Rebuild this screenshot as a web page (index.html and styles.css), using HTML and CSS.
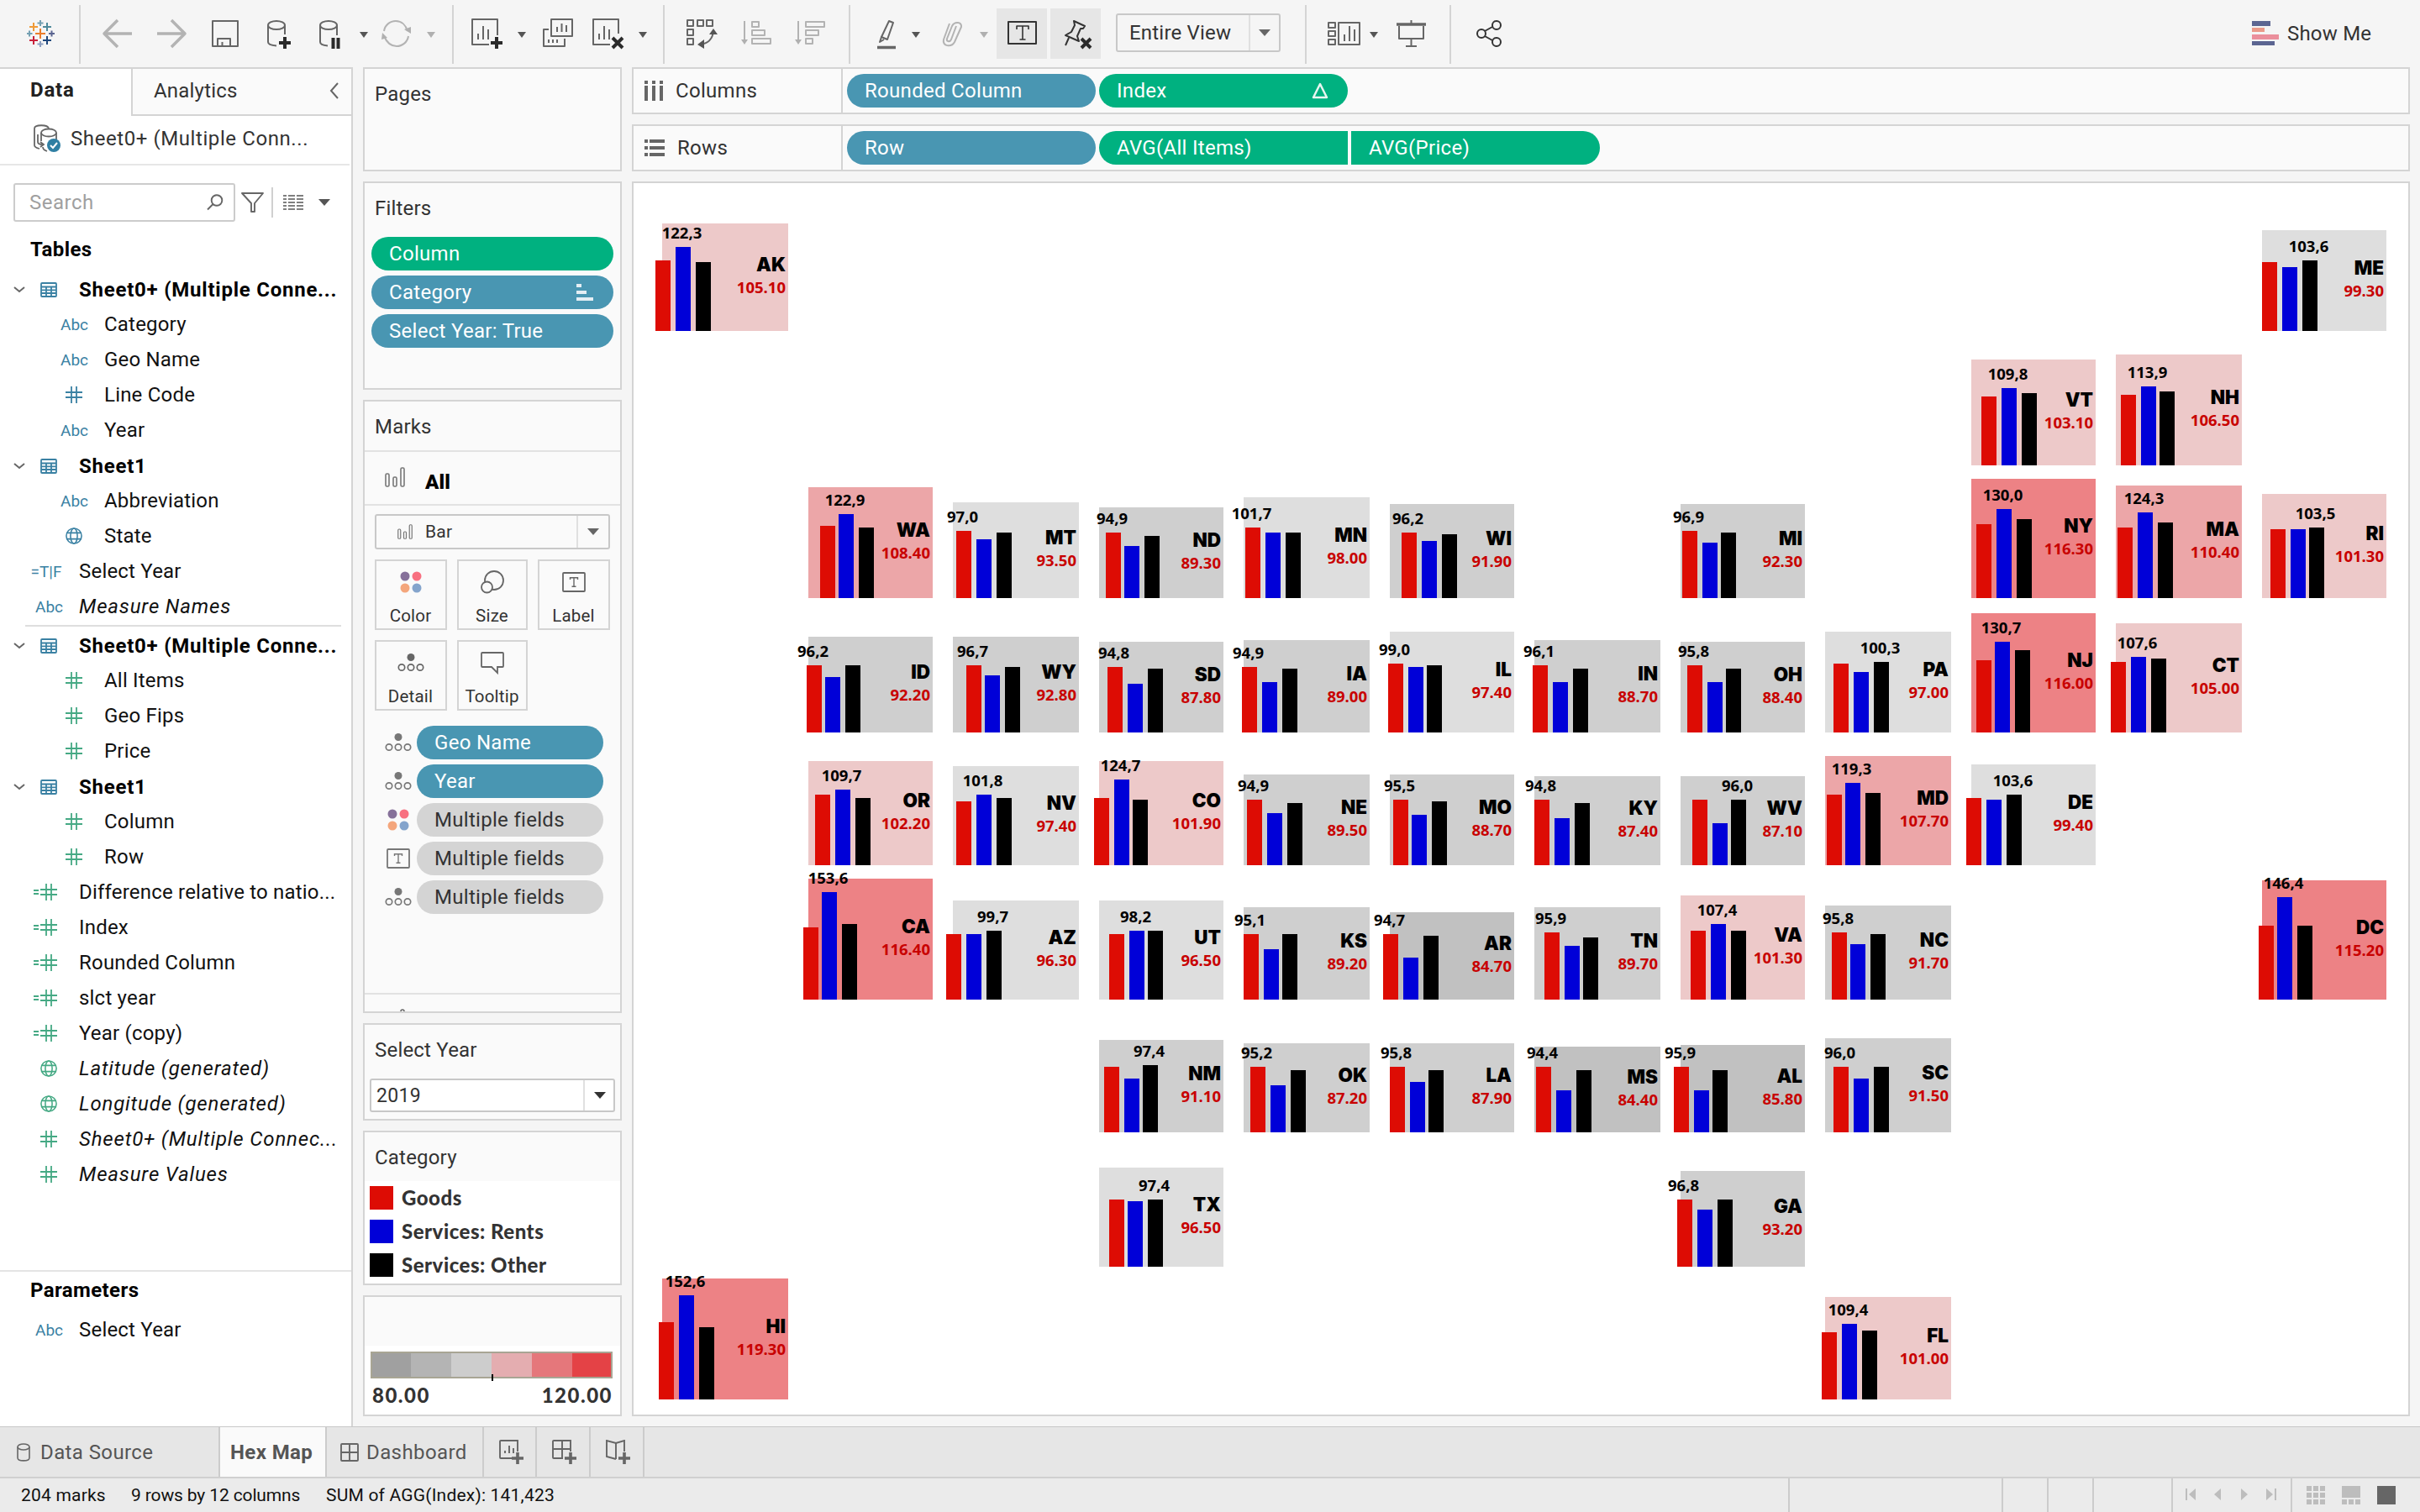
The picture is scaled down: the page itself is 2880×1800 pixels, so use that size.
FILE: index.html
```html
<!DOCTYPE html>
<html lang="en">
<head>
<meta charset="utf-8">
<title>Hex Map</title>
<link rel="stylesheet" href="styles.css">
</head>
<body>
<svg class="defs" aria-hidden="true">
  <symbol id="i-table" viewBox="0 0 20 18"><path d="M2 1h16a1 1 0 0 1 1 1v14a1 1 0 0 1-1 1H2a1 1 0 0 1-1-1V2a1 1 0 0 1 1-1zM1 5.500h18M1 9.300h18M1 13h18M7 5.500v11.500M13 5.500v11.500" fill="none" stroke="currentColor" stroke-width="1.800"/></symbol>
  <symbol id="i-hash" viewBox="0 0 20 20"><path d="M7 0v20M13 0v20M0 7h20M0 13h20" fill="none" stroke="currentColor" stroke-width="1.800"/></symbol>
  <symbol id="i-calc" viewBox="0 0 28 20"><path d="M15 0v20M21 0v20M8 7h20M8 13h20M0 8h6M0 12h6" fill="none" stroke="currentColor" stroke-width="1.800"/></symbol>
  <symbol id="i-globe" viewBox="0 0 22 22"><g fill="none" stroke="currentColor" stroke-width="1.700"><circle cx="11" cy="11" r="10"/><ellipse cx="11" cy="11" rx="4.500" ry="10"/><path d="M2 7h18M2 15h18"/></g></symbol>
  <symbol id="i-chev" viewBox="0 0 14 8"><path d="M1 1l6 5 6-5" fill="none" stroke="#666" stroke-width="2"/></symbol>
  <symbol id="i-caret" viewBox="0 0 14 8"><path d="M0 0h14L7 8z" fill="currentColor"/></symbol>
  <symbol id="i-detail" viewBox="0 0 32 24"><circle cx="16" cy="5.500" r="4.500" fill="currentColor"/><g fill="none" stroke="currentColor" stroke-width="1.700"><circle cx="5" cy="17.500" r="3.700"/><circle cx="16" cy="17.500" r="3.700"/><circle cx="27" cy="17.500" r="3.700"/></g></symbol>
  <symbol id="i-color" viewBox="0 0 26 26"><circle cx="6" cy="6" r="5.500" fill="#86719a"/><circle cx="20" cy="6" r="5.500" fill="#f87080"/><circle cx="6" cy="20" r="5.500" fill="#f4a67c"/><circle cx="20" cy="20" r="5.500" fill="#84a4cc"/></symbol>
  <symbol id="i-text" viewBox="0 0 28 24"><rect x="1" y="1" width="26" height="22" rx="1" fill="none" stroke="currentColor" stroke-width="1.800"/><path d="M9.500 9V6.800h9V9M14 6.800v10.400M11.500 17.200h5" fill="none" stroke="currentColor" stroke-width="1.400"/></symbol>
  <symbol id="i-bars" viewBox="0 0 24 24"><g fill="none" stroke="currentColor" stroke-width="1.600"><rect x="1" y="8" width="4" height="15" rx="1.500"/><rect x="10" y="12" width="4" height="11" rx="1.500"/><rect x="19" y="1" width="4" height="22" rx="1.500"/></g></symbol>
</svg>

<header class="toolbar">
  <svg width="96" viewBox="0 0 96 80"><g fill="none" stroke-width="2"><path d="M48 34v12M42 40h12" stroke="#eb7d2b"/><path d="M40 27v10M35 32h10" stroke="#ef9a37"/><path d="M56 27v10M51 32h10" stroke="#4f8a9b"/><path d="M40 43v10M35 48h10" stroke="#c8203a"/><path d="M56 43v10M51 48h10" stroke="#1f477c"/><path d="M48 24v7M44.500 27.500h7M35 36.500v7M32 40h6.500" stroke="#75a0b2"/><path d="M48 49v7M44.500 52.500h7" stroke="#8c9ebf"/><path d="M61.500 36.500v7M58 40h7" stroke="#5a6591"/></g><path class="sep" d="M95 6v70"/></svg>
  <svg width="144" viewBox="96 0 144 80"><g class="off" stroke-width="3"><path class="thick" d="M157 40h-32M140 24l-16 16 16 16"/><path class="thick" d="M187 40h32M204 24l16 16-16 16"/></g></svg>
  <svg width="60" viewBox="240 0 60 80"><path d="M253 25h30v30h-30zM259 55v-9h15v9M264.500 55v-5"/></svg>
  <svg width="60" viewBox="300 0 60 80"><ellipse cx="329" cy="30" rx="10" ry="5"/><path d="M319 30v20c0 2 3 4 10 4.500M339 30v11"/><path class="bold" d="M339 44v14M332 51h14"/></svg>
  <svg width="86" viewBox="360 0 86 80"><ellipse cx="391" cy="30" rx="10" ry="5"/><path d="M381 30v20c0 2 3 4 9 4.500M401 30v12"/><path class="bold" d="M396.500 45v13M402.500 45v13"/><path class="tri" d="M428 38h10l-5 7z"/></svg>
  <svg width="94" viewBox="446 0 94 80"><g class="off"><path d="M457 37c1-7 7-12 14-12 7 0 12 5 14 12M486 43c-1 7-7 12-14 12-7 0-12-5-15-12"/></g><path class="tri lite" d="M481 35l8-3v8zM461 45l-6-6-1 8zM508 38h10l-5 7z"/><path class="sep" d="M539 6v70"/></svg>
  <svg width="92" viewBox="540 0 92 80"><path d="M582 53h-20V23h30v19M569 47v-7M575 47V31M581 47V35"/><path class="bold" d="M591 44v14M584 51h14"/><path class="tri" d="M616 38h10l-5 7z"/></svg>
  <svg width="64" viewBox="632 0 64 80"><path d="M656 23h25v20h-25zM663 38v-6M668.500 38V28M674 38v-8M653 35h-6v20h25v-9M653 51v-4M658 51v-4M663 51v-4"/></svg>
  <svg width="95" viewBox="696 0 95 80"><path d="M726 53h-20V23h30v17M713 47v-7M719 47V31M725 47V35"/><path class="bold" d="M729 45l12 12M741 45l-12 12"/><path class="tri" d="M760 38h10l-5 7z"/><path class="sep" d="M790 6v70"/></svg>
  <svg width="77" viewBox="791 0 77 80"><path d="M818 24h7v7h-7zM830 24h7v7h-7zM841 24h7v7h-7zM818 35h7v7h-7zM818 46h7v7h-7zM833 53c9-1 15-6 16-16"/><path class="tri" d="M844 41h10l-5-7zM838 47l-8 6 8 5z"/></svg>
  <svg width="64" viewBox="868 0 64 80"><g class="off"><path d="M886 25v25M895 26h8v6h-8zM895 36h15v6h-15zM895 46h22v6h-22z"/></g><path class="tri lite" d="M882 47h8l-4 6z"/></svg>
  <svg width="80" viewBox="932 0 80 80"><g class="off"><path d="M950 25v25M959 26h22v6h-22zM959 36h15v6h-15zM959 46h8v6h-8z"/></g><path class="tri lite" d="M946 47h8l-4 6z"/><path class="sep" d="M1011 6v70"/></svg>
  <svg width="94" viewBox="1012 0 94 80"><path d="M1058 25l5 2-7 20-7-3zM1049 44l-2 6 5-3"/><path d="M1044 56.500h22" class="thick"/><path class="tri" d="M1085 38h10l-5 7z"/></svg>
  <svg width="80" viewBox="1106 0 80 80"><g class="off"><path d="M1138 31l-6 16c-2 4-6 2-5-1l6-15c3-6 12-5 11 1l-8 18c-4 7-15 5-13-3l7-19"/></g><path class="tri lite" d="M1166 38h10l-5 7z"/></svg>
  <svg class="dark" width="60" viewBox="1186 0 60 80"><path class="hot" d="M1186 10h60v60h-60z"/><path d="M1200 26h33v26h-33z"/><path d="M1210 35v-4h14v4M1217 31v16M1213.500 47h7" stroke-width="1.600"/></svg>
  <svg class="dark" width="78" viewBox="1246 0 78 80"><path class="hot" d="M1250 10h60v60h-60z"/><path d="M1278 25l13 6-2 3-3 0-4 9 2 6-16-7 7-4 4-8zM1272 45l-4 9"/><path class="bold" d="M1287 46l11 11M1298 46l-11 11"/></svg>
  <div class="fit"><span>Entire View</span><svg width="14" height="8"><use href="#i-caret"/></svg></div>
  <svg width="31" viewBox="1524 0 31 80"><path class="sep" d="M1554 6v70"/></svg>
  <svg width="93" viewBox="1555 0 93 80"><path d="M1581 27h8v6h-8zM1581 37h8v6h-8zM1581 47h8v6h-8zM1593 27h25v26h-25zM1600 49v-8M1606 49V31M1612 49V35"/><path class="tri" d="M1630 38h10l-5 7z"/></svg>
  <svg width="79" viewBox="1648 0 79 80"><path d="M1662 29h35" class="thick"/><path d="M1665 31v15h29V31M1679.500 46v9M1673 55h13M1679.500 24v4"/><path class="sep" d="M1726 6v70"/></svg>
  <svg class="dark" width="90" viewBox="1727 0 90 80"><circle cx="1763" cy="40" r="5"/><circle cx="1781" cy="30" r="5"/><circle cx="1781" cy="50" r="5"/><path d="M1767 37l9-5M1767 43l9 5"/></svg>
  <div class="showme"><svg width="34" height="32" viewBox="0 0 34 32"><path d="M0 1h22v6H0z" fill="#5c6692"/><path d="M0 9h15v5H0z" fill="#eb9a8a"/><path d="M0 17h32v6H0z" fill="#eb8f9c"/><path d="M0 25h27v5H0z" fill="#5b6591"/></svg><span>Show Me</span></div>
</header>

<main class="work">
  <aside class="data">
    <div class="dtabs"><b>Data</b><span>Analytics<svg width="12" height="20" viewBox="0 0 12 20"><path d="M10 1L2 10l8 9" fill="none" stroke="#666" stroke-width="2"/></svg></span></div>
    <div class="source"><svg width="34" height="34" viewBox="0 0 34 34" fill="none" stroke="#666" stroke-width="1.800"><path d="M19 5c-1-5-17-5-17 0v20c0 2 2 3 6 4M6 12v9c0 2 3 3 6 3M9 21l4 3-4 3"/><ellipse cx="19" cy="10" rx="9" ry="4.500"/><path d="M10 10v10M28 10v8M12 27c0 3 2 4 5 5"/><circle cx="25" cy="25" r="8" fill="#2f7fa3" stroke="none"/><path d="M21 25l3 3 5-6" stroke="#fff" stroke-width="2"/></svg><span>Sheet0+ (Multiple Conn...</span></div>
    <div class="find">
      <div class="search"><span>Search</span><svg width="20" height="20" viewBox="0 0 20 20" fill="none" stroke="#666" stroke-width="1.900"><circle cx="12" cy="7.500" r="6.300"/><path d="M7.500 12L1 18.500"/></svg></div>
      <svg width="28" height="26" viewBox="0 0 28 26" fill="none" stroke="#666" stroke-width="1.900" stroke-linejoin="round"><path d="M1 2h25L16 14v10h-4V14z"/></svg>
      <i></i>
      <svg width="24" height="20" viewBox="0 0 24 20"><path d="M0 2h4M6 2h8M16 2h8M0 6h4M6 6h8M16 6h8M0 10h4M6 10h8M16 10h8M0 14h4M6 14h8M16 14h8M0 18h4M6 18h8M16 18h8" stroke="#555" stroke-width="1.700"/></svg>
      <svg class="fc" width="14" height="8"><use href="#i-caret"/></svg>
    </div>
    <h3>Tables</h3>
    <ul class="tree">
      <li class="tb"><svg class="cv"><use href="#i-chev"/></svg><svg class="ic"><use href="#i-table"/></svg>Sheet0+ (Multiple Conne...</li>
      <li class="ch"><em>Abc</em>Category</li>
      <li class="ch"><em>Abc</em>Geo Name</li>
      <li class="ch"><svg class="ic"><use href="#i-hash"/></svg>Line Code</li>
      <li class="ch"><em>Abc</em>Year</li>
      <li class="tb"><svg class="cv"><use href="#i-chev"/></svg><svg class="ic"><use href="#i-table"/></svg>Sheet1</li>
      <li class="ch"><em>Abc</em>Abbreviation</li>
      <li class="ch"><svg class="ic"><use href="#i-globe"/></svg>State</li>
      <li><em class="tf">=T|F</em>Select Year</li>
      <li class="it"><em>Abc</em>Measure Names</li>
    </ul>
    <ul class="tree meas">
      <li class="tb"><svg class="cv"><use href="#i-chev"/></svg><svg class="ic"><use href="#i-table"/></svg>Sheet0+ (Multiple Conne...</li>
      <li class="ch"><svg class="ic"><use href="#i-hash"/></svg>All Items</li>
      <li class="ch"><svg class="ic"><use href="#i-hash"/></svg>Geo Fips</li>
      <li class="ch"><svg class="ic"><use href="#i-hash"/></svg>Price</li>
      <li class="tb"><svg class="cv"><use href="#i-chev"/></svg><svg class="ic"><use href="#i-table"/></svg>Sheet1</li>
      <li class="ch"><svg class="ic"><use href="#i-hash"/></svg>Column</li>
      <li class="ch"><svg class="ic"><use href="#i-hash"/></svg>Row</li>
      <li><svg class="ic calc"><use href="#i-calc"/></svg>Difference relative to natio...</li>
      <li><svg class="ic calc"><use href="#i-calc"/></svg>Index</li>
      <li><svg class="ic calc"><use href="#i-calc"/></svg>Rounded Column</li>
      <li><svg class="ic calc"><use href="#i-calc"/></svg>slct year</li>
      <li><svg class="ic calc"><use href="#i-calc"/></svg>Year (copy)</li>
      <li class="it"><svg class="ic"><use href="#i-globe"/></svg>Latitude (generated)</li>
      <li class="it"><svg class="ic"><use href="#i-globe"/></svg>Longitude (generated)</li>
      <li class="it"><svg class="ic"><use href="#i-hash"/></svg>Sheet0+ (Multiple Connec...</li>
      <li class="it"><svg class="ic"><use href="#i-hash"/></svg>Measure Values</li>
    </ul>
    <section class="params">
      <h3>Parameters</h3>
      <ul class="tree"><li><em>Abc</em>Select Year</li></ul>
    </section>
  </aside>

  <div class="cards">
    <section class="card pages"><h4>Pages</h4></section>
    <section class="card filters"><h4>Filters</h4>
      <div class="pills">
        <div class="pill green">Column</div>
        <div class="pill blue">Category<svg width="20" height="20" viewBox="0 0 20 20" fill="#e4eef4"><path d="M0 0h6v4H0zM0 8h12v4H0zM0 16h20v4H0z"/></svg></div>
        <div class="pill blue">Select Year: True</div>
      </div>
    </section>
    <section class="card marks"><h4>Marks</h4>
      <div class="all"><svg width="24" height="24"><use href="#i-bars"/></svg><b>All</b></div>
      <div class="drop kind"><svg width="18" height="18"><use href="#i-bars"/></svg><span>Bar</span><svg class="dc" width="14" height="8"><use href="#i-caret"/></svg></div>
      <div class="btns">
        <div><svg width="26" height="26"><use href="#i-color"/></svg>Color</div>
        <div><svg width="28" height="28" viewBox="0 0 28 28" stroke="#666" stroke-width="1.800" fill="#fafafa"><circle cx="16" cy="12" r="11"/><circle cx="7.500" cy="20" r="6.500"/></svg>Size</div>
        <div><svg width="28" height="24"><use href="#i-text"/></svg>Label</div>
        <div><svg width="32" height="24"><use href="#i-detail"/></svg>Detail</div>
        <div><svg width="28" height="28" viewBox="0 0 28 28" stroke="#666" stroke-width="1.800" fill="none"><path d="M2 2h24a1 1 0 0 1 1 1v15a1 1 0 0 1-1 1h-6v7l-7-7H2a1 1 0 0 1-1-1V3a1 1 0 0 1 1-1z"/></svg>Tooltip</div>
      </div>
      <div class="enc">
        <svg width="32" height="24"><use href="#i-detail"/></svg><div class="pill blue">Geo Name</div>
        <svg width="32" height="24"><use href="#i-detail"/></svg><div class="pill blue">Year</div>
        <svg width="26" height="26"><use href="#i-color"/></svg><div class="pill grey">Multiple fields</div>
        <svg width="28" height="24"><use href="#i-text"/></svg><div class="pill grey">Multiple fields</div>
        <svg width="32" height="24"><use href="#i-detail"/></svg><div class="pill grey">Multiple fields</div>
      </div>
      <div class="more"><svg width="6" height="3" viewBox="0 0 6 3"><path d="M1 3a2 2 0 0 1 4 0" fill="none" stroke="#666" stroke-width="1.500"/></svg></div>
    </section>
    <section class="card year"><h4>Select Year</h4>
      <div class="drop"><span>2019</span><svg class="dc" width="14" height="8"><use href="#i-caret"/></svg></div>
    </section>
    <section class="card cat"><h4>Category</h4>
      <ul class="keys"><li><i class="goods"></i>Goods</li><li><i class="rents"></i>Services: Rents</li><li><i class="other"></i>Services: Other</li></ul>
    </section>
    <section class="card scale">
      <div class="ramp"><i></i><i></i><i></i><i></i><i></i><i></i><b></b></div>
      <div class="ends"><span>80.00</span><span>120.00</span></div>
    </section>
  </div>

  <div class="view">
    <div class="shelf"><div class="sname"><svg width="22" height="24" viewBox="0 0 22 24" fill="#666"><path d="M0 0h4v4H0zM9 0h4v4H9zM18 0h4v4h-4zM0 6h4v18H0zM9 6h4v18H9zM18 6h4v18h-4z"/></svg>Columns</div>
      <div class="pill blue">Rounded Column</div><div class="pill green">Index<svg width="22" height="22" viewBox="0 0 22 22"><path d="M11 3l8 16H3z" fill="none" stroke="#e8f6f0" stroke-width="2.500" stroke-linejoin="round"/></svg></div></div>
    <div class="shelf"><div class="sname"><svg width="24" height="20" viewBox="0 0 24 20" fill="#666"><path d="M0 0h4v4H0zM0 8h4v4H0zM0 16h4v4H0zM6 0h18v4H6zM6 8h18v4H6zM6 16h18v4H6z"/></svg>Rows</div>
      <div class="pill blue">Row</div><div class="pill green flatr">AVG(All Items)</div><div class="pill green flatl">AVG(Price)</div></div>
    <div class="canvas" id="map"></div>
  </div>
</main>

<nav class="tabs">
  <div class="tab ds"><svg width="16" height="22" viewBox="0 0 16 22" fill="none" stroke="#666" stroke-width="1.600"><ellipse cx="8" cy="4.500" rx="7" ry="3.500"/><path d="M1 4.500v13c0 4.500 14 4.500 14 0v-13"/></svg>Data Source</div>
  <div class="tab on">Hex Map</div>
  <div class="tab db"><svg width="22" height="22" viewBox="0 0 22 22" fill="none" stroke="#666" stroke-width="1.900"><rect x="1" y="1" width="20" height="20" rx="1"/><path d="M11 1v20M1 11h20"/></svg>Dashboard</div>
  <div class="tab nw"><svg width="30" height="30" viewBox="0 0 30 30" fill="none" stroke="#666" stroke-width="1.900"><path d="M16 22H2a1 1 0 0 1-1-1V2a1 1 0 0 1 1-1h20v13M7 16v-3M12 16V7M17 16v-6"/><path d="M22 15v14M15 22h14" stroke-width="3.600"/></svg></div>
  <div class="tab nw"><svg width="30" height="30" viewBox="0 0 30 30" fill="none" stroke="#666" stroke-width="1.900"><path d="M13 22H2a1 1 0 0 1-1-1V2a1 1 0 0 1 1-1h20v13M12 1v21M1 11h21"/><path d="M22 15v14M15 22h14" stroke-width="3.600"/></svg></div>
  <div class="tab nw"><svg width="30" height="30" viewBox="0 0 30 30" fill="none" stroke="#666" stroke-width="1.900"><path d="M12 23L1 20V1l11 3 10-3v13M12 4v19"/><path d="M22 15v14M15 22h14" stroke-width="3.600"/></svg></div>
</nav>
<footer class="status">
  <span class="s1">204 marks</span><span class="s2">9 rows by 12 columns</span><span class="s3">SUM of AGG(Index): 141,423</span>
  <i class="c1"></i><i class="c2"></i><i class="c3"></i><i class="c4"></i>
  <div class="nav"><svg width="108" height="14" viewBox="0 0 108 14" fill="#bdbdbd"><path d="M0 0h2v14H0zM12 0v14L4 7zM42 0v14l-8-7zM66 0v14l8-7zM96 0v14l8-7zM106 0h2v14h-2z"/></svg></div>
  <div class="modes"><svg width="106" height="22" viewBox="0 0 106 22"><path fill="#bdbdbd" d="M0 0h6v6H0zM8 0h6v6H8zM16 0h6v6h-6zM0 8h6v6H0zM8 8h6v6H8zM16 8h6v6h-6zM0 16h6v6H0zM8 16h6v6H8zM16 16h6v6h-6zM42 0h22v14H42zM42 16h6v6h-6zM50 16h6v6h-6zM58 16h6v6h-6z"/><path fill="#666" d="M84 0h22v22H84z"/></svg></div>
</footer>
<script src="map.js"></script>
</body>
</html>
```
FILE: styles.css
```css
* { box-sizing: border-box; }
body { margin: 0; width: 2880px; height: 1800px; overflow: hidden; background: #f5f5f5; display: flex; flex-direction: column; font: 24px/30px Roboto, "Liberation Sans", sans-serif; letter-spacing: .2px; color: #333; }
h3, h4, ul { margin: 0; padding: 0; list-style: none; }
svg { display: block; flex: none; }
.defs { position: absolute; width: 0; height: 0; }

.toolbar { height: 80px; flex: none; display: flex; align-items: center; }
.toolbar > svg { height: 80px; fill: none; stroke: #666; stroke-width: 2; stroke-linejoin: round; }
.toolbar > .dark { stroke: #333; }
.toolbar .off { stroke: #b3b3b3; }
.toolbar .sep { stroke: #d4d4d4; }
.toolbar .thick { stroke-width: 3.5; }
.toolbar .bold { stroke: #2b2b2b; stroke-width: 4; }
.toolbar .tri { fill: #555; stroke: none; }
.toolbar .lite { fill: #b0b0b0; }
.toolbar .hot { fill: #e6e6e6; stroke: none; }
.fit { width: 196px; height: 46px; margin: -2px 0 0 4px; border: 2px solid #c8c8c8; border-radius: 3px; display: flex; align-items: center; color: #666; }
.fit span { width: 158px; height: 42px; line-height: 42px; padding-left: 14px; border-right: 2px solid #e0e0e0; color: #333; }
.fit svg { margin-left: 10px; }
.showme { display: flex; align-items: center; gap: 8px; margin-left: 863px; }

.work { height: 1618px; flex: none; display: flex; }
.data { width: 420px; background: #fff; border-top: 2px solid #d4d4d4; border-right: 2px solid #d4d4d4; display: flex; flex-direction: column; color: #111; }
.dtabs { display: flex; height: 56px; line-height: 50px; flex: none; }
.dtabs b { width: 156px; padding-left: 36px; color: #222; font-weight: 700; letter-spacing: .8px; }
.dtabs span { flex: 1; display: flex; align-items: center; justify-content: space-between; padding: 0 14px 2px 25px; background: #fafafa; border-left: 2px solid #d4d4d4; border-bottom: 2px solid #d4d4d4; color: #333; }
.source { height: 59px; flex: none; border-bottom: 2px solid #e6e6e6; margin-right: 2px; display: flex; align-items: center; gap: 11px; padding: 0 0 3px 39px; color: #333; white-space: nowrap; letter-spacing: .58px; }
.find { display: flex; align-items: center; height: 46px; margin: 21px 0 0 16px; flex: none; color: #555; }
.search { width: 264px; height: 46px; border: 2px solid #ccc; border-radius: 3px; display: flex; align-items: center; justify-content: space-between; padding: 0 12px 0 17px; color: #a0a0a0; margin-right: 7px; letter-spacing: .5px; }
.find i { width: 2px; height: 36px; background: #d0d0d0; margin: 0 12px 0 8px; }
.find .fc { margin-left: 18px; }
h3 { font-size: 24px; line-height: 30px; font-weight: 700; color: #000; letter-spacing: .4px; padding: 18px 0 11px 36px; }
.tree { color: #3a81a3; }
.meas { color: #45a984; border-top: 2px solid #dedede; margin: 1px 12px 0 30px; padding-top: 1px; }
.meas li { margin-left: -30px; margin-right: -12px; }
.tree li { height: 42px; display: flex; align-items: center; padding-left: 94px; white-space: nowrap; position: relative; -webkit-text-fill-color: #111; }
.tree .tb { font-weight: 700; letter-spacing: .76px; padding-top: 1px; -webkit-text-fill-color: #000; }
.tree .ch { padding-left: 124px; }
.tree .it { font-style: italic; letter-spacing: .84px; }
.tree em { font-style: normal; font-size: 19px; letter-spacing: 0; position: absolute; left: 42px; width: 32px; text-align: center; padding-top: 2px; -webkit-text-fill-color: #3a81a3; }
.tree .ch em { left: 72px; }
.tree .tf { left: 36px; width: 38px; }
.tree .ic { position: absolute; width: 20px; height: 20px; left: 48px; }
.tree .tb .ic { color: #3a81a3; height: 18px; }
.tree .ch .ic { left: 78px; }
.tree .calc { width: 28px; left: 40px; }
.tree .cv { position: absolute; left: 16px; width: 14px; height: 8px; }
.params { border-top: 2px solid #e4e4e4; margin-top: auto; height: 186px; }
.params h3 { padding: 7px 0 11px 36px; }

.cards { width: 308px; margin-left: 12px; display: flex; flex-direction: column; gap: 12px; height: 1606px; }
.card { border: 2px solid #d4d4d4; background: #fafafa; flex: none; overflow: hidden; }
h4 { font: inherit; height: 46px; padding: 15px 0 0 12px; }
.pages { height: 124px; } .filters { height: 248px; } .marks { height: 730px; display: flex; flex-direction: column; }
.year { height: 116px; } .cat { height: 184px; } .scale { height: 144px; padding-top: 58px; }
.pills { display: flex; flex-direction: column; gap: 6px; padding: 18px 8px 0; }
.pill { height: 40px; line-height: 40px; border-radius: 20px; padding: 0 22px 0 21px; color: #fff; display: flex; justify-content: space-between; align-items: center; white-space: nowrap; letter-spacing: .3px; }
.blue { background: #4996b2; } .green { background: #00b180; } .grey { background: #d4d4d4; color: #333; }
.pills .pill svg { margin-right: 2px; }
.marks h4 { height: 58px; flex: none; }
.all { height: 66px; flex: none; border: solid #e2e2e2; border-width: 2px 0; display: flex; align-items: center; gap: 24px; padding: 0 0 2px 24px; color: #777; font-weight: 700; }
.all b { color: #000; padding-top: 11px; }
.drop { border: 2px solid #c8c8c8; border-radius: 3px; display: flex; align-items: center; background: #fafafa; font-size: 21px; color: #333; }
.kind { margin: 10px 12px 12px; height: 42px; flex: none; padding-left: 25px; color: #777; }
.kind span { margin-left: 15px; width: 182px; height: 38px; line-height: 38px; border-right: 2px solid #e0e0e0; color: #333; }
.drop .dc { margin-left: 11px; color: #666; }
.btns { display: grid; grid-template-columns: 86px 84px 86px; gap: 12px; padding: 0 12px; flex: none; font-size: 20.5px; color: #666; }
.btns div { height: 84px; border: 2px solid #d4d4d4; display: grid; grid-template-rows: 49px 31px; justify-items: center; align-items: center; padding-right: 1px; -webkit-text-fill-color: #333; }
.enc { display: grid; grid-template-columns: 62px 222px; row-gap: 6px; margin-top: 18px; align-items: center; color: #777; }
.enc svg { margin-left: 18px; justify-self: center; }
.more { margin-top: auto; height: 22px; border-top: 2px solid #e2e2e2; padding: 17px 0 0 42px; }
.year .drop { margin: 18px 6px 0; height: 40px; background: #fff; font-size: 23px; padding-left: 6px; }
.year .drop span { width: 248px; height: 36px; line-height: 38px; border-right: 2px solid #e0e0e0; letter-spacing: .3px; }
.year .dc { color: #333; }
.keys { background: #fff; height: 122px; margin-top: 12px; padding: 6px 0 0 6px; display: flex; flex-direction: column; gap: 12px; font: 900 24px/26px Lato, sans-serif; letter-spacing: .5px; }
.keys li { display: flex; align-items: center; gap: 10px; height: 28px; }
.keys i { width: 28px; height: 28px; }
.goods { background: #dd0c04; } .rents { background: #0000d8; } .other { background: #000; }
.ramp { height: 40px; background: #fff; padding: 7px 0 0 7px; display: flex; position: relative; width: 304px; }
.ramp i { width: 48px; height: 32px; border: solid #a8a594; border-width: 2px 0; flex: none; }
.ramp i:nth-child(1) { background: #a0a0a0; border-left-width: 2px; } .ramp i:nth-child(2) { background: #b4b4b4; } .ramp i:nth-child(3) { background: #cdcdcd; }
.ramp i:nth-child(4) { background: #e4adb0; } .ramp i:nth-child(5) { background: #e5777b; } .ramp i:nth-child(6) { background: #e44246; border-right-width: 2px; }
.ramp b { position: absolute; left: 151px; top: 34px; width: 2px; height: 8px; background: #000; }
.ends { background: #fff; height: 44px; display: flex; justify-content: space-between; padding: 5px 9px 0 9px; font: 900 24px/28px Lato, sans-serif; letter-spacing: 1.5px; }

.view { width: 2116px; margin-left: 12px; display: flex; flex-direction: column; gap: 12px; height: 1606px; }
.shelf { height: 56px; flex: none; background: #fafafa; border: 2px solid #d4d4d4; display: flex; align-items: center; gap: 4px; }
.sname { width: 249px; height: 52px; border-right: 2px solid #d4d4d4; margin-right: 1px; display: flex; align-items: center; gap: 15px; padding-left: 13px; letter-spacing: .3px; }
.shelf .pill { width: 296px; }
.flatr { border-radius: 20px 0 0 20px; } .flatl { border-radius: 0 20px 20px 0; }
.canvas { height: 1470px; background: #fff; border: 2px solid #d4d4d4; padding: 18px 0 0 34px; display: grid; column-gap: 24px; grid-template-columns: repeat(6, 150px 148px); grid-template-rows: repeat(4, 158px 160px) 158px; align-content: start; }
.tile { position: relative; align-self: end; display: flex; flex-direction: column; align-items: flex-end; justify-content: center; padding: 0 3px 4px 0; }
.tile b { font: 900 22.5px/27px Inter, sans-serif; letter-spacing: 0; color: #000; }
.tile span { font: 700 18.5px/27px "Open Sans", sans-serif; letter-spacing: 0; color: #c80000; }
.tile i { position: absolute; bottom: 0; width: 18px; }
.tile u { position: absolute; width: 80px; text-align: center; font: 700 18.5px/20px "Open Sans", sans-serif; letter-spacing: 0; text-decoration: none; color: #000; }
.r3 { background: #ed8285; } .r2 { background: #eca6a8; } .r1 { background: #edc9c9; }
.g1 { background: #dedede; } .g2 { background: #cfcfcf; } .g3 { background: #c1c1c1; }

.tabs { height: 62px; flex: none; background: #e6e6e6; border-top: 1px solid #c8c8c8; border-bottom: 2px solid #d0d0d0; display: flex; color: #555; }
.tab { border-right: 2px solid #ccc; display: flex; align-items: center; white-space: nowrap; }
.ds { width: 262px; padding-left: 20px; gap: 12px; letter-spacing: .4px; }
.on { width: 127px; padding-left: 12px; background: #fafafa; font-weight: 700; letter-spacing: .4px; }
.db { width: 187px; padding-left: 16px; gap: 9px; letter-spacing: .4px; }
.nw { width: 64px; padding-left: 18px; }
.nw:nth-child(4) { width: 63px; }
.status { height: 40px; background: #ebebeb; display: flex; align-items: center; font-size: 21px; color: #111; white-space: nowrap; }
.s1 { width: 131px; margin-left: 25px; } .s2 { width: 232px; letter-spacing: -.13px; } .s3 { width: 1740px; letter-spacing: .2px; }
.status i { height: 40px; border-left: 2px solid #ccc; }
.c1 { width: 254px; } .c2, .c3 { width: 54px; } .c4 { width: 94px; }
.nav, .modes { height: 40px; border-left: 2px solid #ccc; width: 142px; padding: 12px 0 0 15px; }
.modes { padding-top: 9px; padding-left: 17px; width: 150px; }
```
FILE: map.js
```js
// state, column, row, tile height, index value, label, labelled bar, bar x offsets, bar heights
const colX = c => 788 + 173 * c + (c % 2);
const states = [
["AK",0,0,128,"105.10","122,3",1,[780,804,828],[84,100,82]],
["ME",11,0,120,"99.30","103,6",2,[2692,2716,2740],[82,76,84]],
["VT",9,1,126,"103.10","109,8",1,[2358,2382,2406],[82,92,86]],
["NH",10,1,132,"106.50","113,9",1,[2524,2548,2570],[84,94,88]],
["WA",1,2,132,"108.40","122,9",1,[976,998,1022],[86,100,84]],
["MT",2,2,114,"93.50","97,0",0,[1138,1162,1186],[80,70,78]],
["ND",3,2,108,"89.30","94,9",0,[1316,1338,1362],[78,62,74]],
["MN",4,2,120,"98.00","101,7",0,[1482,1506,1530],[84,78,78]],
["WI",5,2,112,"91.90","96,2",0,[1668,1692,1716],[78,68,76]],
["MI",7,2,112,"92.30","96,9",0,[2002,2026,2048],[80,66,78]],
["NY",9,2,142,"116.30","130,0",1,[2352,2376,2400],[88,106,94]],
["MA",10,2,134,"110.40","124,3",1,[2520,2544,2568],[84,102,90]],
["RI",11,2,124,"101.30","103,5",2,[2702,2726,2748],[82,82,84]],
["ID",1,3,114,"92.20","96,2",0,[960,982,1006],[80,66,80]],
["WY",2,3,114,"92.80","96,7",0,[1150,1172,1196],[80,68,78]],
["SD",3,3,108,"87.80","94,8",0,[1318,1342,1366],[78,58,76]],
["IA",4,3,110,"89.00","94,9",0,[1478,1502,1526],[78,60,76]],
["IL",5,3,120,"97.40","99,0",0,[1652,1676,1698],[82,78,80]],
["IN",6,3,110,"88.70","96,1",0,[1824,1848,1872],[80,60,76]],
["OH",7,3,108,"88.40","95,8",0,[2008,2032,2054],[80,60,76]],
["PA",8,3,120,"97.00","100,3",2,[2182,2206,2230],[82,72,84]],
["NJ",9,3,142,"116.00","130,7",1,[2352,2374,2398],[86,108,98]],
["CT",10,3,130,"105.00","107,6",1,[2512,2536,2560],[84,90,88]],
["OR",1,4,124,"102.20","109,7",1,[970,994,1018],[84,90,80]],
["NV",2,4,118,"97.40","101,8",1,[1138,1162,1186],[76,84,80]],
["CO",3,4,124,"101.90","124,7",1,[1302,1326,1348],[80,102,78]],
["NE",4,4,108,"89.50","94,9",0,[1484,1508,1532],[78,62,74]],
["MO",5,4,108,"88.70","95,5",0,[1658,1680,1704],[78,60,76]],
["KY",6,4,106,"87.40","94,8",0,[1826,1850,1874],[78,56,74]],
["WV",7,4,106,"87.10","96,0",2,[2014,2038,2060],[78,50,78]],
["MD",8,4,130,"107.70","119,3",1,[2174,2196,2220],[84,98,86]],
["DE",9,4,120,"99.40","103,6",2,[2340,2364,2388],[80,78,84]],
["CA",1,5,144,"116.40","153,6",1,[956,978,1002],[86,128,90]],
["AZ",2,5,118,"96.30","99,7",2,[1126,1150,1174],[78,78,82]],
["UT",3,5,118,"96.50","98,2",1,[1320,1344,1366],[78,82,82]],
["KS",4,5,110,"89.20","95,1",0,[1480,1504,1526],[78,60,78]],
["AR",5,5,104,"84.70","94,7",0,[1646,1670,1694],[78,50,76]],
["TN",6,5,110,"89.70","95,9",0,[1838,1862,1884],[80,64,74]],
["VA",7,5,124,"101.30","107,4",1,[2012,2036,2060],[82,90,82]],
["NC",8,5,112,"91.70","95,8",0,[2180,2202,2226],[80,66,78]],
["DC",11,5,142,"115.20","146,4",1,[2688,2710,2734],[88,122,88]],
["NM",3,6,110,"91.10","97,4",2,[1314,1338,1360],[78,64,80]],
["OK",4,6,106,"87.20","95,2",0,[1488,1512,1536],[78,56,74]],
["LA",5,6,106,"87.90","95,8",0,[1654,1678,1700],[78,60,74]],
["MS",6,6,102,"84.40","94,4",0,[1828,1852,1876],[78,50,74]],
["AL",7,6,104,"85.80","95,9",0,[1992,2016,2038],[78,50,74]],
["SC",8,6,112,"91.50","96,0",0,[2182,2206,2230],[78,64,78]],
["TX",3,7,118,"96.50","97,4",2,[1320,1342,1366],[80,78,80]],
["GA",7,7,114,"93.20","96,8",0,[1996,2020,2044],[80,68,80]],
["HI",0,8,144,"119.30","152,6",1,[784,808,832],[92,124,86]],
["FL",8,8,122,"101.00","109,4",1,[2168,2192,2216],[80,90,82]]
];
const bars = ["goods", "rents", "other"];
const shade = v => v > 113.33 ? "r3" : v > 106.67 ? "r2" : v > 100 ? "r1" : v > 93.33 ? "g1" : v > 86.67 ? "g2" : "g3";
document.getElementById("map").innerHTML = states.map(([s, c, r, h, v, label, k, xs, hs]) => {
  const x0 = colX(c);
  const cols = xs.map((x, i) => `<i class="${bars[i]}" style="left:${x - x0}px;height:${hs[i]}px"></i>`).join("");
  return `<div class="tile ${shade(+v)}" style="grid-area:${r + 1}/${c + 1};height:${h}px"><b>${s}</b><span>${v}</span>${cols}` +
    `<u style="left:${xs[k] - x0 - 32.5}px;bottom:${hs[k] + 7}px">${label}</u></div>`;
}).join("");
```
